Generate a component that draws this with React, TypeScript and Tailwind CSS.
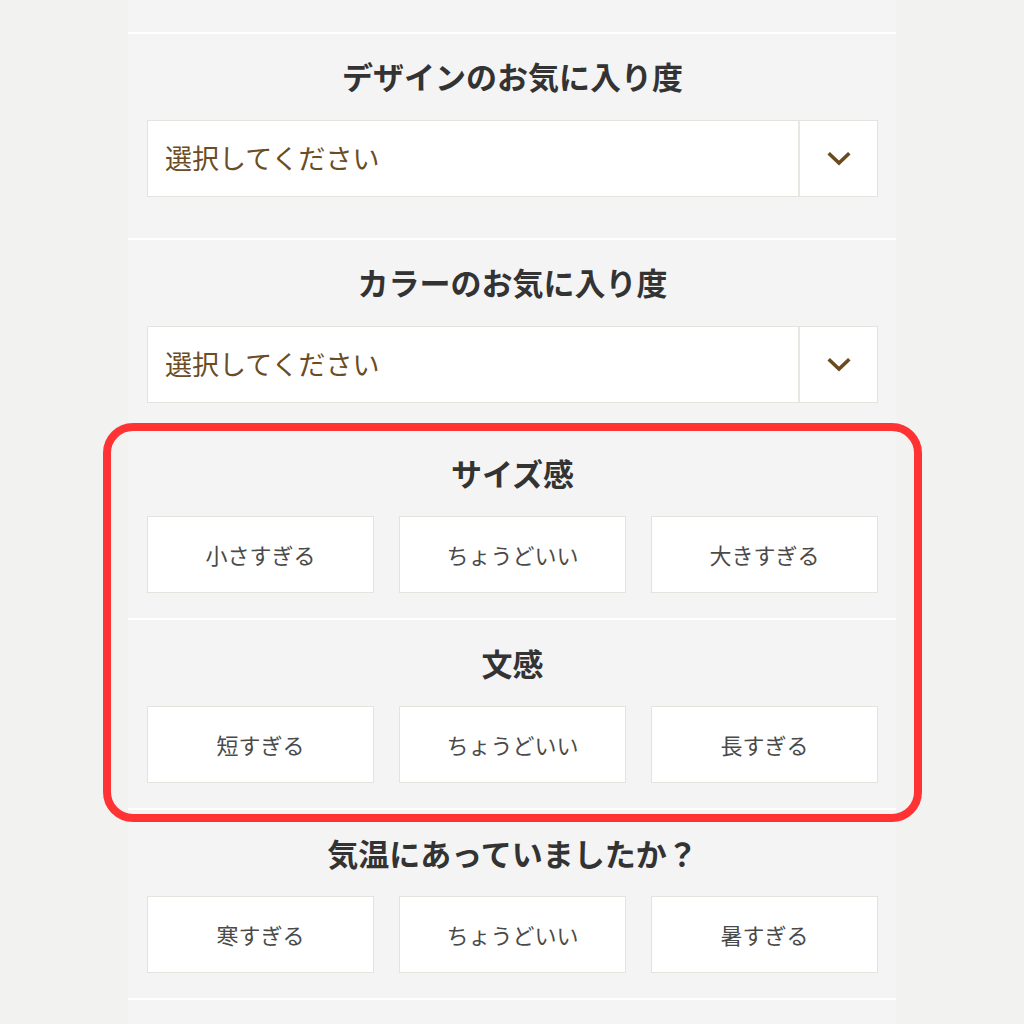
import type { ReactNode } from 'react';

const FONT = '"Noto Sans CJK JP", "Noto Sans", sans-serif';

// ── Chevron for the select's right-hand cell ─────────────────────────────────
function Chevron() {
  return (
    <svg width="24" height="14" viewBox="0 0 24 14" fill="none">
      <polyline points="3,2.5 12,11 21,2.5" stroke="#6b4a1f" strokeWidth="3.6" strokeLinecap="square" strokeLinejoin="miter" />
    </svg>
  );
}

function Heading({ children }: { children: ReactNode }) {
  return <h2 className="text-center text-[31px] leading-[40px] font-bold text-[#333333]">{children}</h2>;
}

function Select() {
  return (
    <div className="mt-[24px] flex h-[77px] bg-white border border-[#e4e3de]">
      <div className="flex-1 flex items-center pl-[17px] text-[27px] text-[#6b4c24]">選択してください</div>
      <div className="w-[79px] flex items-center justify-center border-l-2 border-[#e8e7e2]">
        <Chevron />
      </div>
    </div>
  );
}

function Choices({ items }: { items: string[] }) {
  return (
    <div className="mt-[23px] grid grid-cols-3 gap-[25px]">
      {items.map((t, i) => (
        <button key={i} className="h-[77px] bg-white border border-[#e4e3de] text-[22px] text-[#4a4a4a]">
          {t}
        </button>
      ))}
    </div>
  );
}

function Section({ children, className = '' }: { children: ReactNode; className?: string }) {
  return <section className={`border-t-2 border-white pl-[19px] pr-[18px] ${className}`}>{children}</section>;
}

export default function App() {
  return (
    <div className="h-[1024px] w-full overflow-hidden bg-[#f2f2f0] flex justify-center" style={{ fontFamily: FONT }}>
      <div className="w-[768px] bg-[#f4f4f4] pt-[32px] min-h-[1024px]">
        <Section className="pt-[22px] pb-[41px]">
          <Heading>デザインのお気に入り度</Heading>
          <Select />
        </Section>
        <Section className="pt-[22px] pb-[25px]">
          <Heading>カラーのお気に入り度</Heading>
          <Select />
        </Section>

        <div className="relative">
          <Section className="pt-[23px] pb-[25px]">
            <Heading>サイズ感</Heading>
            <Choices items={['小さすぎる', 'ちょうどいい', '大きすぎる']} />
          </Section>
          <Section className="pt-[23px] pb-[25px]">
            <Heading>文感</Heading>
            <Choices items={['短すぎる', 'ちょうどいい', '長すぎる']} />
          </Section>
          {/* highlight annotation drawn over the two sections */}
          <div className="pointer-events-none absolute -top-[5px] -bottom-[14px] -left-[25px] -right-[26px] border-[8px] border-[#ff3333] rounded-[30px]" />
        </div>

        <Section className="pt-[23px] pb-[25px]">
          <Heading>気温にあっていましたか？</Heading>
          <Choices items={['寒すぎる', 'ちょうどいい', '暑すぎる']} />
        </Section>
        <div className="border-t-2 border-white" />
      </div>
    </div>
  );
}
